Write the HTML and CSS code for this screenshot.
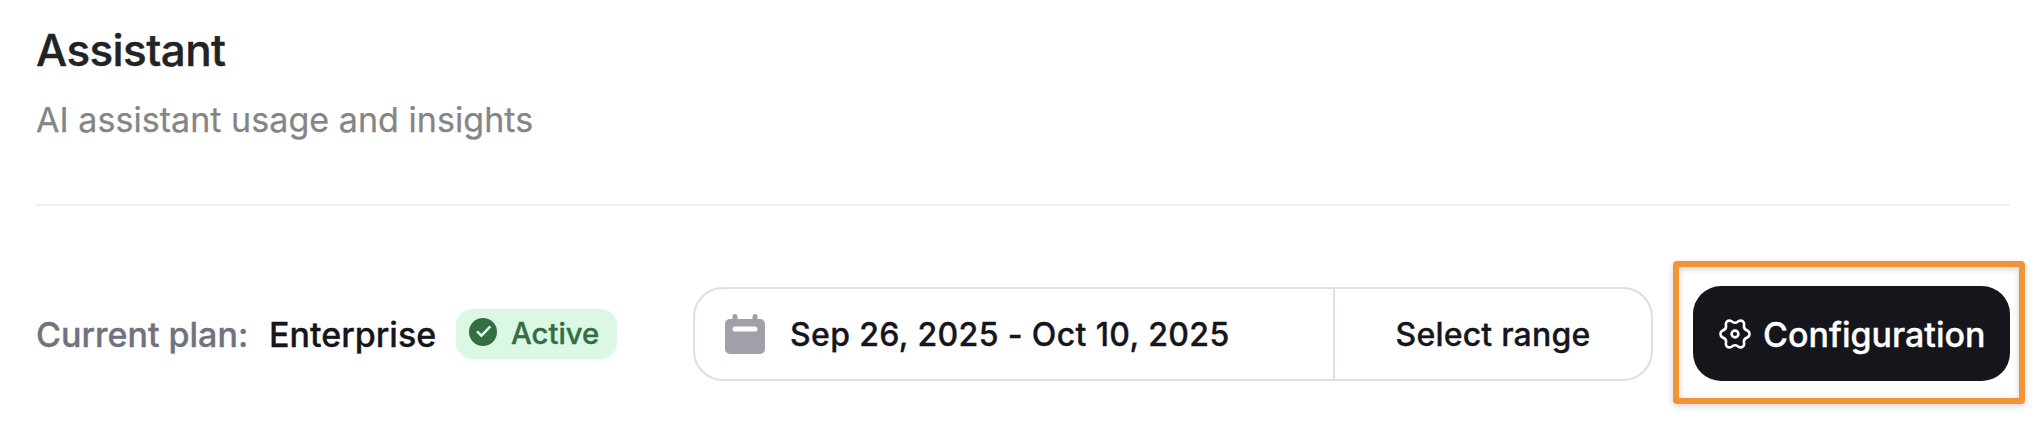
FILE: index.html
```
<!DOCTYPE html>
<html lang="en">
<head>
<meta charset="utf-8">
<title>Assistant</title>
<link rel="stylesheet" href="styles.css">
</head>
<body>
<main class="page">
  <header class="header">
    <h1 class="title">Assistant</h1>
    <p class="subtitle">AI assistant usage and insights</p>
  </header>
  <section class="toolbar">
    <div class="plan">
      <span class="plan-label">Current plan:</span>
      <span class="plan-name">Enterprise</span>
      <span class="badge">
        <svg class="badge-icon" viewBox="0 0 28 28"><circle cx="14" cy="14" r="14" fill="#346e43"/><path d="M8 13.400l4.400 4.200 9-9.200" fill="none" stroke="#dbf8e5" stroke-width="2.600"/></svg>
        <span class="badge-text">Active</span>
      </span>
    </div>
    <div class="range">
      <button class="range-dates">
        <svg class="calendar" viewBox="0 0 40 40"><path fill="#a0a0aa" d="M7.500 5V2.500a2.500 2.500 0 0 1 5 0V5h15V2.500a2.500 2.500 0 0 1 5 0V5H35a5 5 0 0 1 5 5v25a5 5 0 0 1-5 5H5a5 5 0 0 1-5-5V10a5 5 0 0 1 5-5z"/><rect x="7.500" y="12.500" width="25" height="5" rx="2.500" fill="#fff"/></svg>
        <span class="dates">Sep 26, 2025 - Oct 10, 2025</span>
      </button>
      <button class="range-select">Select range</button>
    </div>
    <div class="highlight-anchor">
      <button class="configure">
        <svg class="gear" viewBox="0 0 32 30" fill="none" stroke="#fff" stroke-width="2.600"><path d="M8 2.500Q10 .9 12.500 2.200C14.500 4.300 17.500 4.300 19.500 2.200Q22 .9 24 2.500Q25.600 4 25 6.500C24.600 9.200 25.500 10.600 28.300 11.500Q30.600 12.800 30.600 15Q30.600 17.200 28.300 18.500C25.500 19.400 24.600 20.800 25 23.500Q25.600 26 24 27.500Q22 29.100 19.500 27.800C17.500 25.700 14.500 25.700 12.500 27.800Q10 29.100 8 27.500Q6.400 26 7 23.500C7.400 20.800 6.500 19.400 3.700 18.500Q1.400 17.200 1.400 15Q1.400 12.800 3.700 11.500C6.500 10.600 7.400 9.200 7 6.500Q6.400 4 8 2.500Z"/><circle cx="16" cy="15" r="3.400"/></svg>
        <span class="configure-text">Configuration</span>
      </button>
      <div class="highlight"></div>
    </div>
  </section>
</main>
</body>
</html>
```
FILE: styles.css
```
* { box-sizing: border-box; }
body {
  margin: 0;
  background: #fff;
  color: #15161c;
  font-family: Inter, "Liberation Sans", sans-serif;
}
button { font: inherit; color: inherit; border: 0; background: none; padding: 0; margin: 0; }
svg { display: block; flex: none; }
.page { width: 2036px; height: 426px; padding: 0 26px 0 36px; overflow: hidden; }
.header { height: 206px; padding-top: 20px; border-bottom: 2px solid #f1f1f1; }
.title {
  margin: 0;
  color: #222325;
  font-size: 44px;
  line-height: 60px;
  font-weight: 500;
  letter-spacing: -.6px;
  -webkit-text-stroke: .4px;
}
.subtitle {
  margin: 15px 0 0;
  color: #858585;
  font-size: 34px;
  line-height: 50px;
  letter-spacing: .05px;
  -webkit-text-stroke: .25px;
}
.toolbar {
  display: flex;
  align-items: center;
  margin-top: 80px;
  height: 95px;
  font-weight: 500;
  -webkit-text-stroke: .35px;
}
.plan { display: flex; align-items: center; width: 657px; font-size: 34px; white-space: nowrap; }
.plan-label { width: 233px; color: #71727d; padding-top: 1px; }
.plan-name { width: 187px; padding-top: 1px; }
.badge {
  display: flex;
  align-items: center;
  gap: 14px;
  width: 161px;
  height: 50px;
  padding-left: 13px;
  border-radius: 16px;
  background: #dbf8e5;
  color: #346e43;
  font-size: 29.3px;
}
.badge-icon { width: 28px; height: 28px; margin-bottom: 3px; }
.badge-text { line-height: 50px; padding-top: 1px; }
.range { display: flex; width: 960px; height: 94px; margin: 1px 40px 0 0; border: 2px solid #dedee4; border-radius: 30px; font-size: 32px; }
.range-dates { display: flex; align-items: center; gap: 25px; width: 640px; padding-left: 30px; border-right: 2px solid #dedee4; }
.calendar { width: 40px; height: 40px; }
.dates { letter-spacing: .37px; }
.range-select { flex: 1; letter-spacing: .2px; }
.highlight-anchor { position: relative; width: 317px; height: 95px; }
.configure {
  display: flex;
  align-items: center;
  gap: 12px;
  width: 317px;
  height: 95px;
  padding-left: 26px;
  border-radius: 28px;
  background: #15161c;
  color: #fff;
  font-size: 34px;
}
.configure-text { padding-top: 1px; }
.gear { width: 32px; height: 30px; }
.highlight {
  position: absolute;
  inset: -25px -15px -23px -20px;
  border: 6px solid #f19337;
  border-radius: 4px;
  filter: drop-shadow(0 2px 3px rgba(0, 0, 0, .18));
  pointer-events: none;
}
```
